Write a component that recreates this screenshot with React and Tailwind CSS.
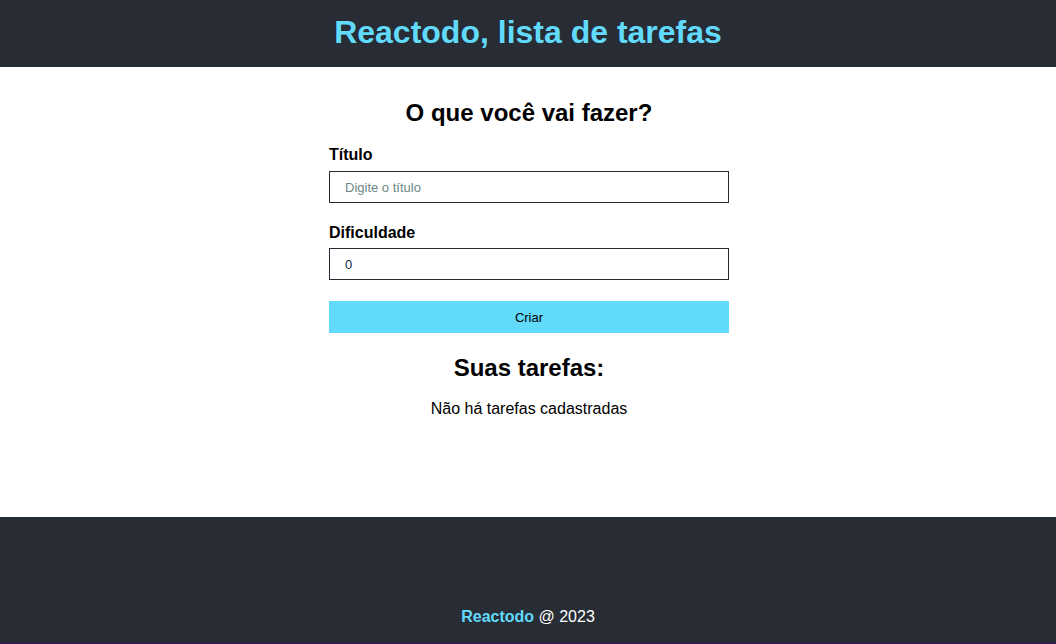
import React, { useState } from "react";

const App = () => {
  const [title, setTitle] = useState("");
  const [difficulty, setDifficulty] = useState(0);

  return (
    <div className="flex flex-col min-h-screen bg-white font-['Liberation_Sans',Arial,sans-serif] text-black">
      <header className="h-[67px] bg-[#282c34] flex items-center justify-center pb-[2px]">
        <h1 className="text-[32px] leading-[37px] font-bold text-[#61dafb]">
          Reactodo, lista de tarefas
        </h1>
      </header>

      <main className="h-[450px] flex flex-col items-center pt-8 pl-[2px]">
        <h2 className="text-[24px] leading-[28px] font-bold">O que você vai fazer?</h2>

        <form className="w-[400px] flex flex-col mt-[19px]" onSubmit={(e) => e.preventDefault()}>
          <label className="text-[16px] leading-[18px] font-bold">Título</label>
          <input
            type="text"
            value={title}
            onChange={(e) => setTitle(e.target.value)}
            placeholder="Digite o título"
            className="mt-[7px] h-[32px] border border-[#282c34] px-[15px] text-[13px] placeholder:text-[#6b8783] outline-none"
          />

          <label className="mt-[21px] text-[16px] leading-[18px] font-bold">Dificuldade</label>
          <input
            type="text"
            value={difficulty}
            onChange={(e) => setDifficulty(e.target.value)}
            className="mt-[6px] h-[32px] border border-[#282c34] px-[15px] text-[13px] text-[#0f2a48] outline-none"
          />

          <button type="submit" className="mt-[21px] h-[32px] pt-px bg-[#61dafb] text-[13px] text-black">
            Criar
          </button>
        </form>

        <h2 className="mt-[21px] text-[24px] leading-[28px] font-bold">Suas tarefas:</h2>
        <p className="mt-[18px] text-[16px] leading-[18px]">Não há tarefas cadastradas</p>
      </main>

      <footer className="h-[127px] bg-[#282c34] border-b border-[#35155d] flex justify-center pt-[91px]">
        <p className="text-[16px] leading-[18px] text-white">
          <span className="font-bold text-[#61dafb]">Reactodo</span> @ 2023
        </p>
      </footer>
    </div>
  );
};

export default App;
